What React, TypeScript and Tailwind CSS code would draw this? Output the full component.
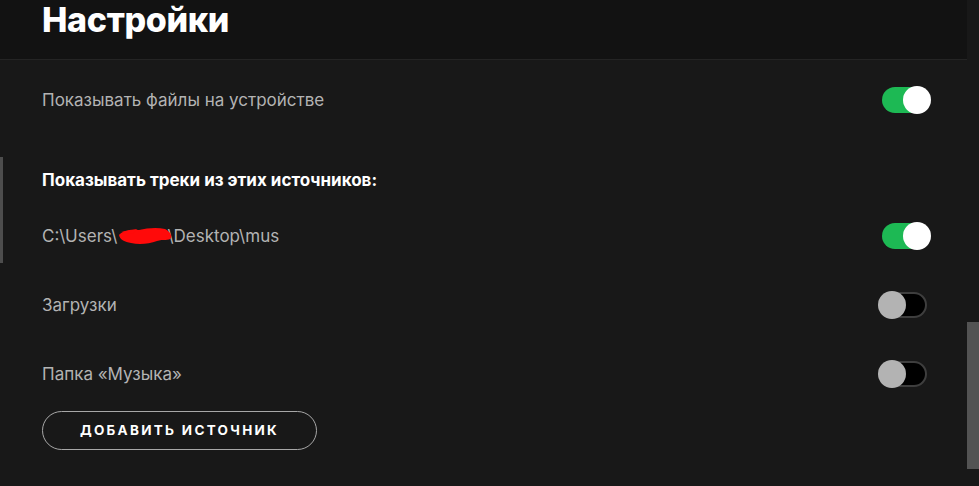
import { useState } from 'react';

type ToggleProps = {
  on: boolean;
  onChange: () => void;
};

function Toggle({ on, onChange }: ToggleProps) {
  return (
    <button
      type="button"
      onClick={onChange}
      className={`relative h-[26px] w-[45px] shrink-0 rounded-full ${
        on ? 'bg-[#1db954]' : 'border-2 border-[#3e3e3e] bg-black'
      }`}
    >
      <span
        className={`absolute top-1/2 h-[28px] w-[28px] -translate-y-1/2 rounded-full ${
          on ? 'right-[-4px] bg-white' : 'left-[-6px] bg-[#b3b3b3]'
        }`}
      />
    </button>
  );
}

function Row({ children, on, onChange }: { children: React.ReactNode } & ToggleProps) {
  return (
    <div className="flex h-[69px] items-center justify-between">
      <div className="text-[17px] leading-6 text-[#b3b3b3]">{children}</div>
      <Toggle on={on} onChange={onChange} />
    </div>
  );
}

export default function App() {
  const [local, setLocal] = useState(true);
  const [sources, setSources] = useState([true, false, false]);

  const flip = (i: number) => setSources(s => s.map((v, j) => (j === i ? !v : v)));

  return (
    <main
      className="relative flex h-[486px] w-[979px] overflow-hidden bg-[#181818] text-white"
      style={{ fontFamily: 'Inter, "Noto Sans", sans-serif' }}
    >
      {/* edge of the panel on the left */}
      <span className="absolute left-0 top-[157px] h-[106px] w-[3px] bg-[#4d4d4d]" />

      <div className="flex min-w-0 flex-1 flex-col">
        <header className="h-[60px] shrink-0 border-b border-[#242424] bg-[#121212] pl-[42px]">
          <h1 className="text-[34px] font-extrabold leading-[40px] tracking-[-0.01em]">Настройки</h1>
        </header>

        <section className="flex flex-col pl-[42px] pr-[40px] pt-[5px]">
          <Row on={local} onChange={() => setLocal(v => !v)}>
            Показывать файлы на устройстве
          </Row>

          <h2 className="mt-[34px] mb-[9px] text-[17px] font-bold leading-6 text-white">
            Показывать треки из этих источников:
          </h2>

          <Row on={sources[0]} onChange={() => flip(0)}>
            C:\Users\
            <span className="relative inline-block w-[50px] align-middle">
              <svg
                viewBox="0 0 56 20"
                className="absolute left-[0px] top-[-11px] h-[20px] w-[56px]"
              >
                <path
                  d="M2 9 C6 4 14 3 22 4 C30 2 40 1 48 3 C52 5 55 8 54 12 C52 15 46 13 40 15 C32 18 22 19 14 17 C8 16 3 14 2 9 Z"
                  fill="#ff0a0a"
                />
                <path d="M4 6 L20 3 L16 8 Z" fill="#ff0a0a" />
              </svg>
            </span>
            \Desktop\mus
          </Row>
          <Row on={sources[1]} onChange={() => flip(1)}>
            Загрузки
          </Row>
          <Row on={sources[2]} onChange={() => flip(2)}>
            Папка «Музыка»
          </Row>

          <button
            type="button"
            className="mt-[3px] h-[39px] w-[275px] rounded-full border border-[#a7a7a7] text-[13.5px] font-bold tracking-[0.17em] text-white"
          >
            ДОБАВИТЬ ИСТОЧНИК
          </button>
        </section>
      </div>

      {/* scrollbar */}
      <div className="w-[12px] shrink-0 bg-[#181818] pt-[322px]">
        <div className="h-[147px] w-full bg-[#535353]" />
      </div>
    </main>
  );
}
